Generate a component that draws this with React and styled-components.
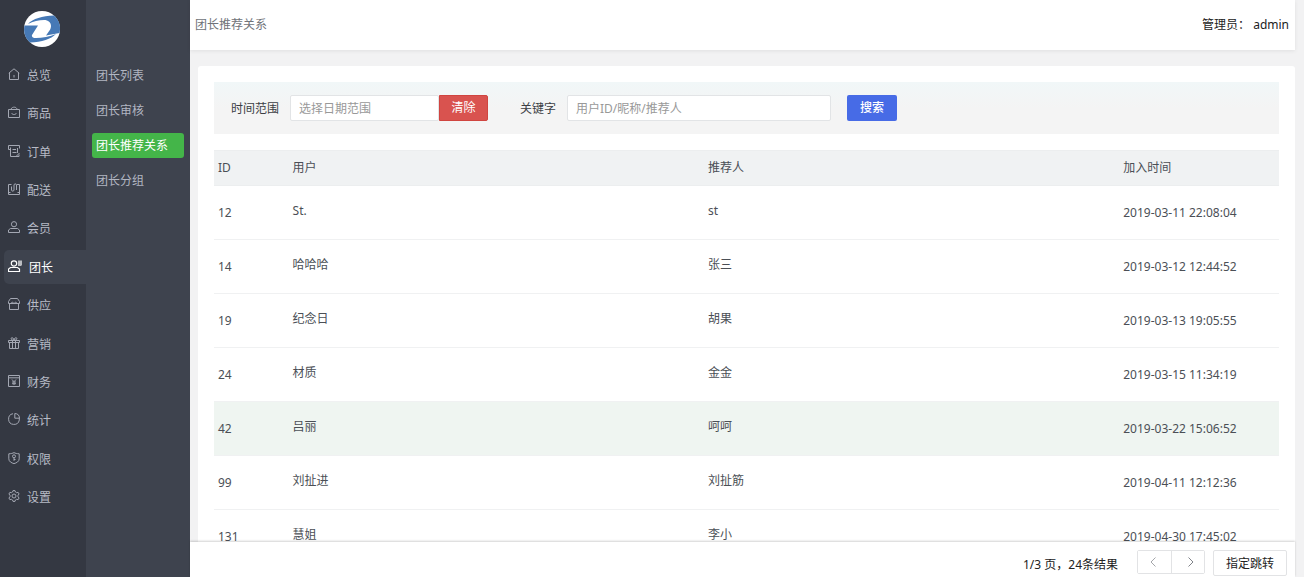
import React, { useState } from 'react';
import styled, { createGlobalStyle } from 'styled-components';

const GlobalStyle = createGlobalStyle`
  * {
    box-sizing: border-box;
  }

  body {
    margin: 0;
    background: #f2f2f3;
    color: #4b4f56;
    font-family: 'Noto Sans', 'Noto Sans CJK SC', sans-serif;
    font-size: 12px;
    line-height: 18px;
  }

  button,
  input {
    font: inherit;
  }
`;

const Layout = styled.div`
  display: flex;
  height: 100vh;
`;

const Rail = styled.nav`
  flex: none;
  width: 86px;
  padding-top: 11px;
  background: #343842;
`;

const Logo = styled.svg`
  display: block;
  width: 36px;
  height: 36px;
  margin: 0 auto 11px 24px;
`;

const RailList = styled.div`
  display: flex;
  flex-direction: column;
  justify-content: space-between;
  height: 456px;
`;

const RailLink = styled.a`
  display: flex;
  align-items: center;
  gap: 7px;
  height: 34px;
  margin-left: 4px;
  padding: 2px 0 0 4px;
  border-radius: 5px 0 0 5px;
  background: ${props => props.$active ? '#3e434e' : 'transparent'};
  color: ${props => props.$active ? '#fff' : '#b7bbc6'};
  text-decoration: none;

  svg {
    flex: none;
    width: ${props => props.$active ? '14px' : '12px'};
    height: 12px;
    margin-bottom: 4px;
    fill: none;
    stroke: currentColor;
    stroke-width: 1;
    opacity: ${props => props.$active ? 1 : 0.85};
  }
`;

const SubMenu = styled.nav`
  flex: none;
  display: flex;
  flex-direction: column;
  gap: 10px;
  width: 104px;
  padding: 63px 6px 0;
  background: #3e434e;
`;

const SubLink = styled.a`
  height: 25px;
  padding-left: 4px;
  border-radius: 3px;
  background: ${props => props.$active ? '#44b549' : 'transparent'};
  color: ${props => props.$active ? '#fff' : '#b2b6c2'};
  line-height: 25px;
  text-decoration: none;
`;

const Main = styled.main`
  flex: 1;
  display: flex;
  flex-direction: column;
  min-width: 0;
  margin-right: 9px;
`;

const Header = styled.header`
  position: relative;
  flex: none;
  display: flex;
  align-items: center;
  justify-content: space-between;
  height: 50px;
  padding: 0 6px 0 5px;
  background: #fff;
  box-shadow: 0 1px 4px rgba(0, 0, 0, 0.08);
`;

const PageTitle = styled.h1`
  margin: 0;
  color: #707379;
  font-size: 12px;
  font-weight: 400;
`;

const Account = styled.span`
  color: #222;
`;

const Content = styled.div`
  flex: 1;
  min-height: 0;
  padding: 16px 0 0 8px;
  overflow-y: auto;
  scrollbar-width: none;
`;

const Card = styled.section`
  padding: 16px;
  border-radius: 3px;
  background: #fff;
`;

const Filter = styled.form`
  display: flex;
  align-items: center;
  height: 52px;
  margin-bottom: 16px;
  padding: 0 17px;
  background: linear-gradient(#f1f7f8, #f4f4f4 50%);
`;

const Label = styled.label`
  margin-right: 11px;
  padding-top: 2px;
  color: #3c3f45;
`;

const TextInput = styled.input`
  width: ${props => props.$width};
  height: 26px;
  padding: 0 8px;
  border: 1px solid #e2e4e6;
  border-radius: 2px;
  background: #fff;
  color: #4b4f56;
  outline: none;

  &::placeholder {
    color: #999;
  }
`;

const ClearButton = styled.button`
  width: 49px;
  height: 26px;
  margin-right: 32px;
  padding: 0;
  border: 1px solid #d04540;
  border-radius: 0 2px 2px 0;
  background: #d9534f;
  color: #fff;
  cursor: pointer;
`;

const SearchButton = styled.button`
  width: 50px;
  height: 26px;
  margin-left: 16px;
  padding: 0;
  border: none;
  border-radius: 2px;
  background: #476be6;
  color: #fff;
  font-weight: 500;
  cursor: pointer;
`;

const Table = styled.table`
  width: 100%;
  border-collapse: separate;
  border-spacing: 0;
  table-layout: fixed;
`;

const HeadCell = styled.th`
  width: ${props => props.$width};
  height: 36px;
  padding: 0 4px;
  border-top: 1px solid #eceeef;
  border-bottom: 1px solid #eceeef;
  background: #f0f2f3;
  font-weight: 400;
  text-align: left;
`;

const Row = styled.tr`
  background: ${props => props.$active ? '#eff5f1' : 'transparent'};
`;

const Cell = styled.td`
  height: 54px;
  padding: 0 4px;
  border-bottom: 1px solid #f0f1f2;
`;

const NameCell = styled(Cell)`
  padding-bottom: 4px;
`;

const Footer = styled.footer`
  position: relative;
  flex: none;
  display: flex;
  align-items: flex-start;
  padding: 8px 8px 1px;
  background: #fff;
  box-shadow: 0 -1px 2px rgba(0, 0, 0, 0.18);
`;

const Summary = styled.span`
  margin: 6px 19px 0 auto;
  color: #222;
`;

const Pager = styled.div`
  display: flex;
  margin-right: 8px;
  border: 1px solid #e2e3e5;
  border-radius: 2px;
`;

const PagerButton = styled.button`
  display: flex;
  align-items: center;
  justify-content: center;
  width: 33px;
  height: 22px;
  padding: 0;
  border: none;
  background: #fff;
  color: ${props => props.disabled ? '#a4a6aa' : '#808389'};
  cursor: pointer;

  svg {
    width: 6px;
    height: 10px;
    fill: none;
    stroke: currentColor;
  }
`;

const PrevButton = styled(PagerButton)`
  padding-right: 4px;
`;

const NextButton = styled(PagerButton)`
  padding-left: 6px;
  border-left: 1px solid #e2e3e5;
`;

const JumpButton = styled.button`
  width: 74px;
  height: 26px;
  padding: 2px 0 0;
  border: 1px solid #e2e3e5;
  border-radius: 2px;
  background: #fff;
  color: #222;
  cursor: pointer;
`;

const menus = [
  { name: '总览', icon: <path d="M.8 5.2 6 .8l5.2 4.4M1.5 4.8v6.7h9V4.8M6 7v2.5" /> },
  { name: '商品', icon: <path d="M.5 3.5h11v8H.5zM3 3.2C3.5 1.6 5.2 1 6.6 1.2 7.8 1.3 8.6 2 9 3M3.5 7c1 2 4 2 5 0" /> },
  { name: '订单', icon: <path d="M2.5 4.5h-2v-4h11v3M2.5 2.5v9H11v-2M9.5 3v5M4.5 4.5H8M4.5 7.5h4M8.5 11l3-3" /> },
  { name: '配送', icon: <path d="M3.5 1.5h-3v8h2M.5 9v2.5h11V9M9 1.5h2.5v8h-2M3.500 3.500V7c0 1.500 2.500 1.500 2.500 0V2c0-1.500 2.500-1.500 2.500 0v5" /> },
  {
    name: '会员',
    icon: (
      <>
        <circle cx="6" cy="3.2" r="2.6" />
        <path d="M2.5 7.5h7l2 1.5v2.5H.5V9z" />
      </>
    ),
  },
  {
    name: '团长',
    viewBox: '0 0 14 12',
    icon: (
      <>
        <circle cx="6" cy="3.5" r="2.7" strokeWidth="1.2" />
        <path d="M2.5 7.5h7l2 1.5v2.5H.5V9z" strokeWidth="1.2" />
        <path d="M10 .5h4V5l-1 1h-3z" fill="currentColor" stroke="none" opacity="0.65" />
      </>
    ),
  },
  { name: '供应', icon: <path d="M2.5.5h7l2 3v2h-11v-2zM1 5.5h2L4.3 4 6 5.5 7.7 4 9 5.5h2M1.5 6v5.5h9V6" /> },
  { name: '营销', icon: <path d="M.5 3.5h11v2H.5zM1.5 5.5v6h9v-6M4.5 3.5v8M7.5 3.5v8M6 3.3C4 3.3 2.8 2.3 3.2 1.2S5.8.8 6 3.3C6.2.8 8.4.1 8.8 1.2S8 3.3 6 3.3" /> },
  { name: '财务', icon: <path d="M.5.5h11v11H.5zM.5 2.8h11M4 4.5l2 2.2 2-2.2M4 7h4M4 8.7h4M6 6.7V10" /> },
  { name: '统计', icon: <path d="M5 .7A5.4 5.4 0 1 0 11.3 7M6.8.5v4.7h4.7A4.9 4.9 0 0 0 6.8.5zM11.3 5v2" /> },
  {
    name: '权限',
    icon: (
      <>
        <path d="M.8 1.8C3 1.7 4.8 1.3 6 .6c1.2.7 3 1.1 5.2 1.2v5C11.2 9.5 8.500 11 6 11.600 3.5 11 .8 9.5.8 6.8z" />
        <circle cx="6" cy="4.3" r="1.5" />
        <path d="M6 5.8v3M6 7.5h1.5" />
      </>
    ),
  },
  {
    name: '设置',
    icon: (
      <>
        <path d="M4.600 2 5 .6h2L7.400 2l1.200.7 1.500-.4 1 1.700L10 5.200v1.600L11.100 8l-1 1.700-1.500-.4-1.200.7L7 11.400H5L4.600 10l-1.200-.7-1.500.4-1-1.700L2 6.800V5.200L.9 4l1-1.700 1.500.4z" />
        <circle cx="6" cy="6" r="2" />
      </>
    ),
  },
];

const subMenus = ['团长列表', '团长审核', '团长推荐关系', '团长分组'];

const rows = [
  { id: 12, user: 'St.', referrer: 'st', joined: '2019-03-11 22:08:04' },
  { id: 14, user: '哈哈哈', referrer: '张三', joined: '2019-03-12 12:44:52' },
  { id: 19, user: '纪念日', referrer: '胡果', joined: '2019-03-13 19:05:55' },
  { id: 24, user: '材质', referrer: '金金', joined: '2019-03-15 11:34:19' },
  { id: 42, user: '吕丽', referrer: '呵呵', joined: '2019-03-22 15:06:52' },
  { id: 99, user: '刘扯进', referrer: '刘扯筋', joined: '2019-04-11 12:12:36' },
  { id: 131, user: '慧姐', referrer: '李小', joined: '2019-04-30 17:45:02' },
];

const App = () => {
  const [dateRange, setDateRange] = useState('');
  const [keyword, setKeyword] = useState('');
  const [hovered, setHovered] = useState(42);

  return (
    <>
      <GlobalStyle />
      <Layout>
        <Rail>
          <Logo viewBox="0 0 36 36" aria-hidden="true">
            <circle cx="18" cy="18" r="18" fill="#fff" />
            <g fill="#4679b6">
              <path d="M4 13C9 8 18 4.800 30 4.600A18 18 0 0 1 35.500 22L22 24.500l3.500-5C29 14 26 9 20 9c-5 0-11 1.500-16 4z" />
              <path d="M32 23C27 28 18 31.200 6 31.400A18 18 0 0 1 .5 14.500L14 14.500 8 24C7.500 26 9 27 12 27c6 0 14-1.500 20-4z" />
            </g>
          </Logo>
          <RailList>
            {menus.map(menu => (
              <RailLink key={menu.name} href="#" $active={menu.name === '团长'}>
                <svg viewBox={menu.viewBox || '0 0 12 12'} aria-hidden="true">{menu.icon}</svg>
                {menu.name}
              </RailLink>
            ))}
          </RailList>
        </Rail>

        <SubMenu>
          {subMenus.map(name => (
            <SubLink key={name} href="#" $active={name === '团长推荐关系'}>{name}</SubLink>
          ))}
        </SubMenu>

        <Main>
          <Header>
            <PageTitle>团长推荐关系</PageTitle>
            <Account>管理员： admin</Account>
          </Header>

          <Content>
            <Card>
              <Filter onSubmit={e => e.preventDefault()}>
                <Label htmlFor="range">时间范围</Label>
                <TextInput
                  id="range"
                  $width="149px"
                  placeholder="选择日期范围"
                  value={dateRange}
                  onChange={e => setDateRange(e.target.value)}
                />
                <ClearButton type="button" onClick={() => setDateRange('')}>清除</ClearButton>
                <Label htmlFor="keyword">关键字</Label>
                <TextInput
                  id="keyword"
                  $width="264px"
                  placeholder="用户ID/昵称/推荐人"
                  value={keyword}
                  onChange={e => setKeyword(e.target.value)}
                />
                <SearchButton type="submit">搜索</SearchButton>
              </Filter>

              <Table>
                <thead>
                  <tr>
                    <HeadCell $width="7%">ID</HeadCell>
                    <HeadCell $width="39%">用户</HeadCell>
                    <HeadCell $width="39%">推荐人</HeadCell>
                    <HeadCell $width="15%">加入时间</HeadCell>
                  </tr>
                </thead>
                <tbody>
                  {rows.map(row => (
                    <Row key={row.id} $active={row.id === hovered} onMouseEnter={() => setHovered(row.id)}>
                      <Cell>{row.id}</Cell>
                      <NameCell>{row.user}</NameCell>
                      <NameCell>{row.referrer}</NameCell>
                      <Cell>{row.joined}</Cell>
                    </Row>
                  ))}
                </tbody>
              </Table>
            </Card>
          </Content>

          <Footer>
            <Summary>1/3 页，24条结果</Summary>
            <Pager>
              <PrevButton type="button" aria-label="上一页" disabled>
                <svg viewBox="0 0 6 10"><path d="M5.5.5 1 5l4.5 4.5" /></svg>
              </PrevButton>
              <NextButton type="button" aria-label="下一页">
                <svg viewBox="0 0 6 10"><path d="M.5.5 5 5 .5 9.5" /></svg>
              </NextButton>
            </Pager>
            <JumpButton type="button">指定跳转</JumpButton>
          </Footer>
        </Main>
      </Layout>
    </>
  );
};

export default App;
